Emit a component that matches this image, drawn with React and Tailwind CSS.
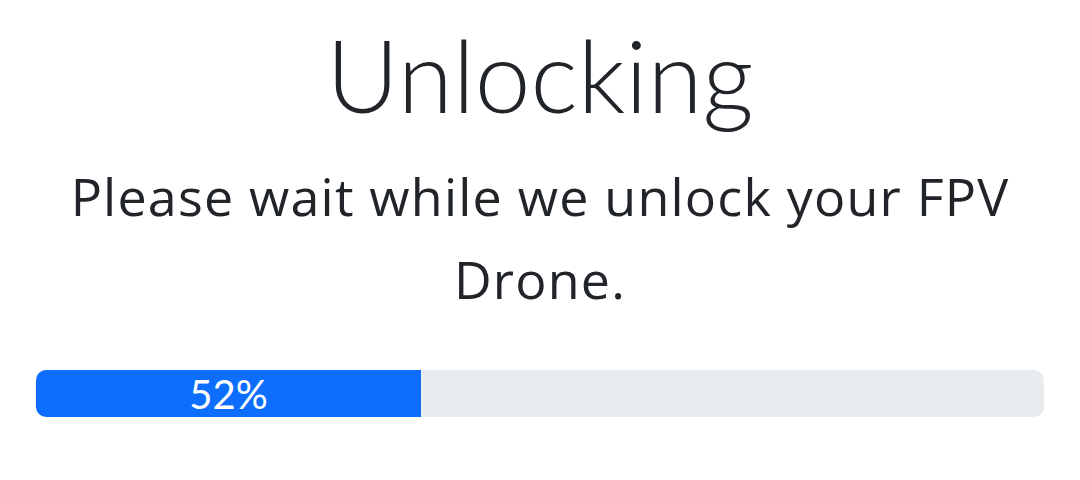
export default function App() {
  const fill = 38.2

  return (
    <div className="w-[1080px] h-[480px] bg-white px-[36px] text-[#212529] flex flex-col items-center font-[Lato,sans-serif]">
      <h1 className="mt-[14px] text-[100px] font-light leading-[120px]">Unlocking</h1>
      <p className="mt-[20px] px-[6px] text-center text-[52px] leading-[83px] tracking-[1.2px] font-['Open_Sans',sans-serif]">
        Please wait while we unlock your FPV Drone.
      </p>

      {/* progress */}
      <div className="mt-[50px] w-full h-[47px] rounded-[10px] bg-[#e9ecef] overflow-hidden flex">
        <div className="h-full bg-[#0d6efd] flex items-center justify-center text-white text-[40px]" style={{ width: `${fill}%` }}>
          52%
        </div>
      </div>
    </div>
  )
}
